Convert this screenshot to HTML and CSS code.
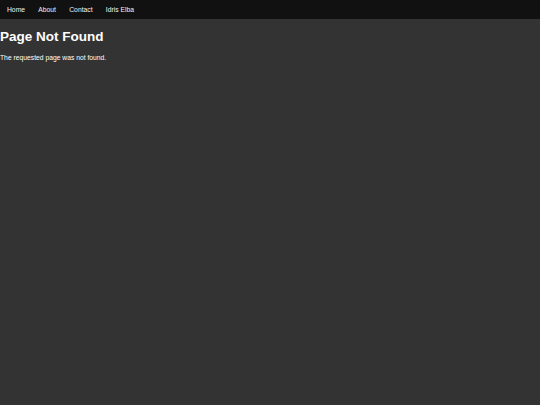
FILE: index.html
```html
<!DOCTYPE html>
<html>
<head>
<meta charset="utf-8">
<link rel="stylesheet" href="styles.css">
</head>
<body>
<nav class="topnav">
  <a href="#">Home</a>
  <a href="#">About</a>
  <a href="#">Contact</a>
  <a href="#">Idris Elba</a>
</nav>
<main class="content">
  <h1 class="title">Page Not Found</h1>
  <p class="msg">The requested page was not found.</p>
</main>
</body>
</html>
```

FILE: styles.css
```css
html, body {
  margin: 0;
  padding: 0;
  background: #333333;
  color: #ffffff;
  font-family: "Liberation Sans", Arial, sans-serif;
  height: 100%;
}
.topnav {
  background: #111111;
  height: 19px;
  display: flex;
  align-items: center;
  padding-left: 7px;
  gap: 13.3px;
}
.topnav a {
  color: #f2f2f2;
  text-decoration: none;
  font-size: 6.75px;
}
.content {
  padding: 0;
}
.title {
  margin: 9px 0 0 0;
  font-size: 13.5px;
  font-weight: bold;
  line-height: 17px;
}
.msg {
  margin: 8px 0 0 0;
  font-size: 6.75px;
  line-height: 9px;
}
```
